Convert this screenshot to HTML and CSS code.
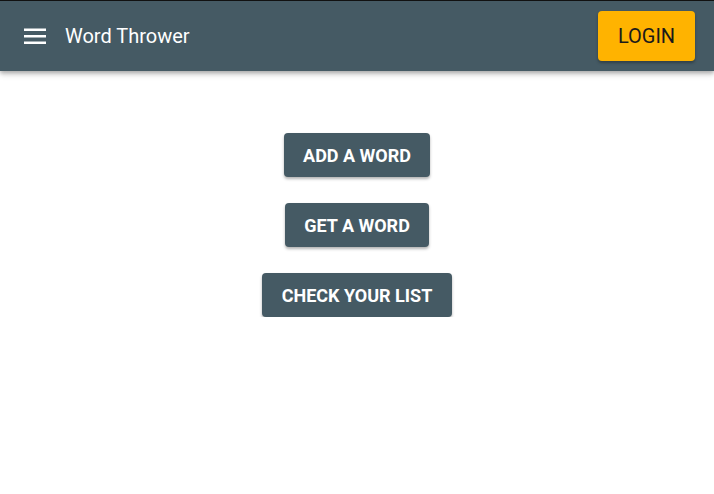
FILE: index.html
```html
<!DOCTYPE html>
<html>
<head>
<meta charset="utf-8">
<link rel="stylesheet" href="styles.css">
</head>
<body>
<header class="appbar">
  <div class="left">
    <button class="menu" aria-label="menu">
      <svg width="22" height="17" viewBox="0 0 22 17"><rect x="0" y="0.5" width="22" height="2.5" fill="#fff"/><rect x="0" y="7" width="22" height="2.5" fill="#fff"/><rect x="0" y="13.5" width="22" height="2.5" fill="#fff"/></svg>
    </button>
    <span class="title">Word Thrower</span>
  </div>
  <button class="login">LOGIN</button>
</header>
<main class="content">
  <button class="action">ADD A WORD</button>
  <button class="action">GET A WORD</button>
  <button class="action">CHECK YOUR LIST</button>
</main>
</body>
</html>
```
FILE: styles.css
```css
html, body { margin: 0; padding: 0; background: #fff; }
body { font-family: Roboto, "Noto Sans", sans-serif; border-top: 1px solid #111; }
.appbar {
  height: 70px;
  background: #455a64;
  display: flex;
  align-items: center;
  justify-content: space-between;
  padding: 0 19px 0 24px;
  box-shadow: 0 2px 4px rgba(0,0,0,0.25), 0 4px 6px rgba(0,0,0,0.12);
  position: relative;
}
.left { display: flex; align-items: center; }
.menu {
  background: none; border: 0; padding: 0; width: 22px; height: 17px;
  display: flex; cursor: pointer; margin-top: 1px;
}
.title {
  color: #fff; font-size: 20px; margin-left: 19px; font-family: Roboto, sans-serif;
}
.login {
  background: #ffb300; color: #1a1a1a; border: 0; border-radius: 4px;
  width: 97px; height: 50px; font-size: 20px; font-family: Roboto, sans-serif;
  box-shadow: 0 2px 3px rgba(0,0,0,0.3);
}
.content {
  display: flex; flex-direction: column; align-items: center;
  padding-top: 62px; gap: 26px;
}
.action {
  background: #455a64; color: #fff; border: 0; border-radius: 4px;
  height: 44px; padding: 0 19.5px; font-size: 18px; font-weight: 700;
  font-family: Roboto, sans-serif;
  box-shadow: 0 2px 3px rgba(0,0,0,0.3);
}
```
